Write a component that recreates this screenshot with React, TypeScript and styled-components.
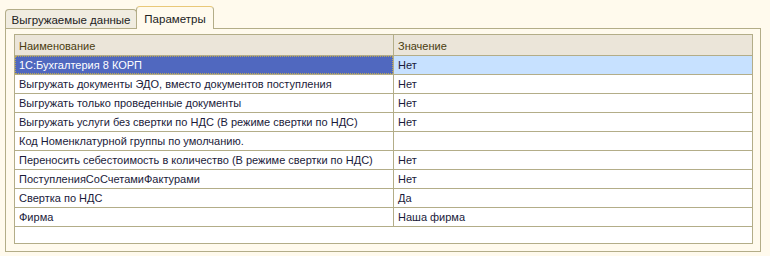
import React from 'react';
import styled, { createGlobalStyle } from 'styled-components';

const GlobalStyle = createGlobalStyle`
  html, body {
    margin: 0;
    padding: 0;
    background: #fffaed;
  }
  body {
    font-family: "Liberation Sans", Arial, sans-serif;
    font-size: 11px;
    color: #1a1a3a;
  }
`;

const Page = styled.div`
  width: 770px;
  height: 256px;
  box-sizing: border-box;
  padding: 0 9px 0 5px;
  background: #fffaed;
`;

const TabStrip = styled.div`
  display: flex;
  align-items: flex-end;
  height: 28px;
`;

const Tab = styled.div<{ $active?: boolean }>`
  box-sizing: border-box;
  display: flex;
  align-items: center;
  justify-content: center;
  position: relative;
  z-index: ${(p) => (p.$active ? 2 : 1)};
  height: ${(p) => (p.$active ? '23px' : '19px')};
  width: ${(p) => (p.$active ? '78px' : '132px')};
  margin-left: ${(p) => (p.$active ? '-1px' : '0')};
  margin-bottom: ${(p) => (p.$active ? '-1px' : '0')};
  padding-top: 1px;
  border: 1px solid #b3ad88;
  border-top-color: ${(p) => (p.$active ? '#e9c878' : '#b3ad88')};
  border-bottom: none;
  border-radius: 4px 4px 0 0;
  background: ${(p) => (p.$active ? '#fffaed' : '#f0ece0')};
  color: #222222;
  font-size: 11.5px;
  white-space: nowrap;
`;

const Panel = styled.div`
  box-sizing: border-box;
  height: 224px;
  border: 1px solid #b3ad88;
  padding: 5px 7px 7px 8px;
  background: #fffaed;
`;

const Grid = styled.div`
  box-sizing: border-box;
  height: 210px;
  border: 1px solid #b3ad88;
  background: #ffffff;
`;

const HeaderRow = styled.div`
  display: grid;
  grid-template-columns: 378px 1px 1fr;
  height: 21px;
  box-sizing: border-box;
  border-bottom: 1px solid #b3ad88;
  background: #ebe5d9;
  color: #4a3c10;
`;

const Row = styled.div`
  display: grid;
  grid-template-columns: 378px 1px 1fr;
  height: 19px;
  box-sizing: border-box;
  border-bottom: 1px solid #b3ad88;
`;

const Divider = styled.div`
  background: #b3ad88;
`;

const Cell = styled.div<{ $selected?: boolean; $current?: boolean }>`
  display: flex;
  align-items: center;
  padding-left: ${(p) => (p.$selected ? '3px' : '4px')};
  box-sizing: border-box;
  white-space: nowrap;
  overflow: hidden;
  background: ${(p) => (p.$selected ? '#5068bf' : p.$current ? '#c7e1ff' : 'transparent')};
  color: ${(p) => (p.$selected ? '#ffffff' : 'inherit')};
  border: ${(p) => (p.$selected ? '1px dotted #b9a65a' : 'none')};
`;

const HeadCell = styled.div`
  display: flex;
  align-items: center;
  padding-left: 4px;
  padding-top: 1px;
`;

const rows: [string, string][] = [
  ['1С:Бухгалтерия 8 КОРП', 'Нет'],
  ['Выгружать документы ЭДО, вместо документов поступления', 'Нет'],
  ['Выгружать только проведенные документы', 'Нет'],
  ['Выгружать услуги без свертки по НДС (В режиме свертки по НДС)', 'Нет'],
  ['Код Номенклатурной группы по умолчанию.', ''],
  ['Переносить себестоимость в количество (В режиме свертки по НДС)', 'Нет'],
  ['ПоступленияСоСчетамиФактурами', 'Нет'],
  ['Свертка по НДС', 'Да'],
  ['Фирма', 'Наша фирма'],
];

export default function App() {
  return (
    <Page>
      <GlobalStyle />
      <TabStrip>
        <Tab>Выгружаемые данные</Tab>
        <Tab $active>Параметры</Tab>
      </TabStrip>
      <Panel>
        <Grid>
          <HeaderRow>
            <HeadCell>Наименование</HeadCell>
            <Divider />
            <HeadCell>Значение</HeadCell>
          </HeaderRow>
          {rows.map(([name, value], i) => (
            <Row key={name}>
              <Cell $selected={i === 0}>{name}</Cell>
              <Divider />
              <Cell $current={i === 0}>{value}</Cell>
            </Row>
          ))}
        </Grid>
      </Panel>
    </Page>
  );
}
